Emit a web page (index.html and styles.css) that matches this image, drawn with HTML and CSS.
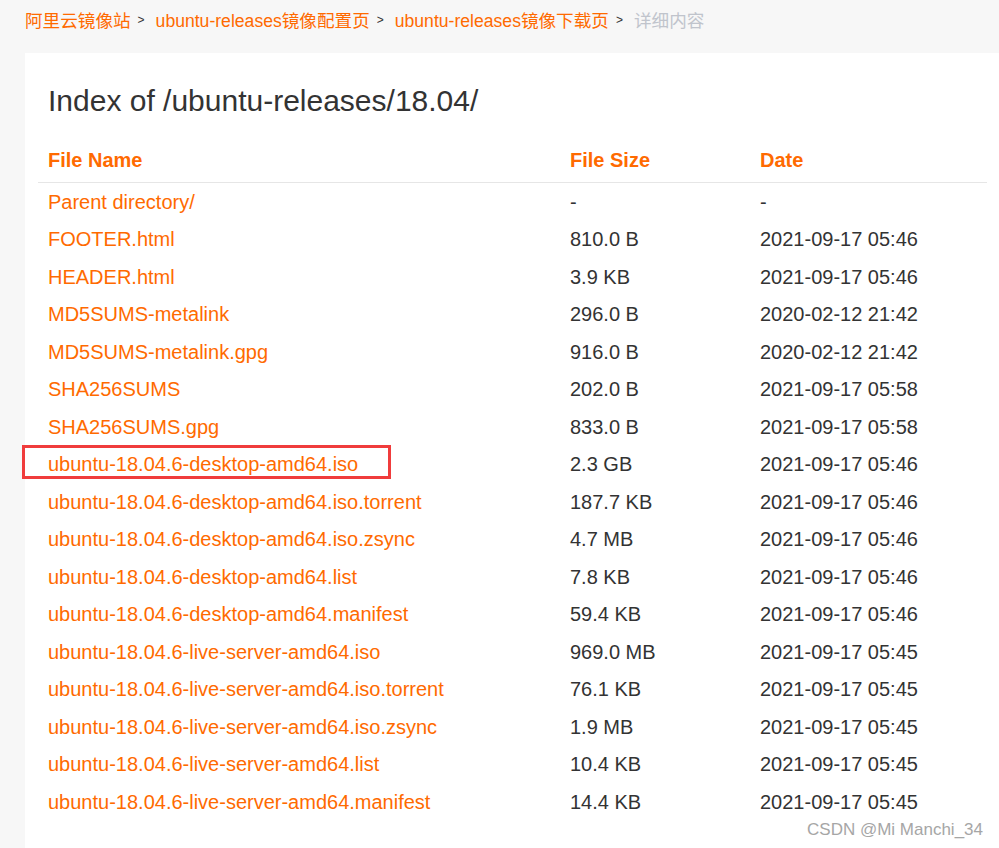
FILE: index.html
```html
<!DOCTYPE html>
<html lang="zh-CN">
<head>
<meta charset="utf-8">
<title>Index of /ubuntu-releases/18.04/</title>
<link rel="stylesheet" href="styles.css">
</head>
<body>
<nav class="crumbs">
  <a class="crumb" href="#">阿里云镜像站</a><span class="sep">&gt;</span>
  <a class="crumb" href="#">ubuntu-releases镜像配置页</a><span class="sep">&gt;</span>
  <a class="crumb" href="#">ubuntu-releases镜像下载页</a><span class="sep">&gt;</span>
  <span class="crumb current">详细内容</span>
</nav>
<main class="card">
  <h1 class="title">Index of /ubuntu-releases/18.04/</h1>
  <table class="listing">
    <thead>
      <tr><th class="c-name">File Name</th><th class="c-size">File Size</th><th class="c-date">Date</th></tr>
    </thead>
    <tbody>
      <tr><td><a href="#">Parent directory/</a></td><td>-</td><td>-</td></tr>
      <tr><td><a href="#">FOOTER.html</a></td><td>810.0 B</td><td>2021-09-17 05:46</td></tr>
      <tr><td><a href="#">HEADER.html</a></td><td>3.9 KB</td><td>2021-09-17 05:46</td></tr>
      <tr><td><a href="#">MD5SUMS-metalink</a></td><td>296.0 B</td><td>2020-02-12 21:42</td></tr>
      <tr><td><a href="#">MD5SUMS-metalink.gpg</a></td><td>916.0 B</td><td>2020-02-12 21:42</td></tr>
      <tr><td><a href="#">SHA256SUMS</a></td><td>202.0 B</td><td>2021-09-17 05:58</td></tr>
      <tr><td><a href="#">SHA256SUMS.gpg</a></td><td>833.0 B</td><td>2021-09-17 05:58</td></tr>
      <tr><td class="marked"><a href="#">ubuntu-18.04.6-desktop-amd64.iso</a><span class="highlight"></span></td><td>2.3 GB</td><td>2021-09-17 05:46</td></tr>
      <tr><td><a href="#">ubuntu-18.04.6-desktop-amd64.iso.torrent</a></td><td>187.7 KB</td><td>2021-09-17 05:46</td></tr>
      <tr><td><a href="#">ubuntu-18.04.6-desktop-amd64.iso.zsync</a></td><td>4.7 MB</td><td>2021-09-17 05:46</td></tr>
      <tr><td><a href="#">ubuntu-18.04.6-desktop-amd64.list</a></td><td>7.8 KB</td><td>2021-09-17 05:46</td></tr>
      <tr><td><a href="#">ubuntu-18.04.6-desktop-amd64.manifest</a></td><td>59.4 KB</td><td>2021-09-17 05:46</td></tr>
      <tr><td><a href="#">ubuntu-18.04.6-live-server-amd64.iso</a></td><td>969.0 MB</td><td>2021-09-17 05:45</td></tr>
      <tr><td><a href="#">ubuntu-18.04.6-live-server-amd64.iso.torrent</a></td><td>76.1 KB</td><td>2021-09-17 05:45</td></tr>
      <tr><td><a href="#">ubuntu-18.04.6-live-server-amd64.iso.zsync</a></td><td>1.9 MB</td><td>2021-09-17 05:45</td></tr>
      <tr><td><a href="#">ubuntu-18.04.6-live-server-amd64.list</a></td><td>10.4 KB</td><td>2021-09-17 05:45</td></tr>
      <tr><td><a href="#">ubuntu-18.04.6-live-server-amd64.manifest</a></td><td>14.4 KB</td><td>2021-09-17 05:45</td></tr>
    </tbody>
  </table>
</main>
<div class="watermark">CSDN @Mi Manchi_34</div>
</body>
</html>
```
FILE: styles.css
```css
html, body {
  margin: 0;
  padding: 0;
  background: #f7f7f7;
  overflow: hidden;
  height: 848px;
  font-family: "Liberation Sans", Arial, "Noto Sans CJK SC", sans-serif;
  color: #333;
}
a { text-decoration: none; color: #ff6a00; }

.crumbs {
  display: flex;
  align-items: center;
  height: 38px;
  padding-left: 25px;
  font-size: 17.6px;
  white-space: nowrap;
}
.crumb { color: #ff6a00; }
.crumb.current { color: #c0c4cc; }
.sep {
  font-size: 12px;
  color: #333;
  margin: 2px 11px 0 7px;
  font-family: "Liberation Sans", Arial, sans-serif;
}

.card {
  margin-top: 15px;
  margin-left: 25px;
  width: 1000px;
  background: #fff;
  padding: 30px 0 40px 13px;
  box-sizing: border-box;
  min-height: 820px;
}
.title {
  margin: 0 0 0 10px;
  font-size: 30px;
  line-height: 36px;
  font-weight: normal;
  color: #333;
}
.listing {
  border-collapse: collapse;
  width: 949px;
  font-size: 20px;
}
.listing th {
  text-align: left;
  color: #ff6a00;
  font-weight: bold;
  padding: 30px 10px 11px;
  line-height: 22px;
  border-bottom: 1px solid #e6e6e6;
}
.c-name { width: 502px; }
.c-size { width: 170px; }
.listing td {
  padding: 0 10px;
  height: 37.5px;
  line-height: 22px;
  white-space: nowrap;
  color: #333;
}
.marked { position: relative; }
.highlight {
  position: absolute;
  left: -16px;
  top: -1px;
  width: 363px;
  height: 28px;
  border: 3px solid #f03c3c;
  pointer-events: none;
}
.watermark {
  position: absolute;
  right: 16px;
  bottom: 8px;
  font-size: 17px;
  color: #a6a6a6;
}
```
